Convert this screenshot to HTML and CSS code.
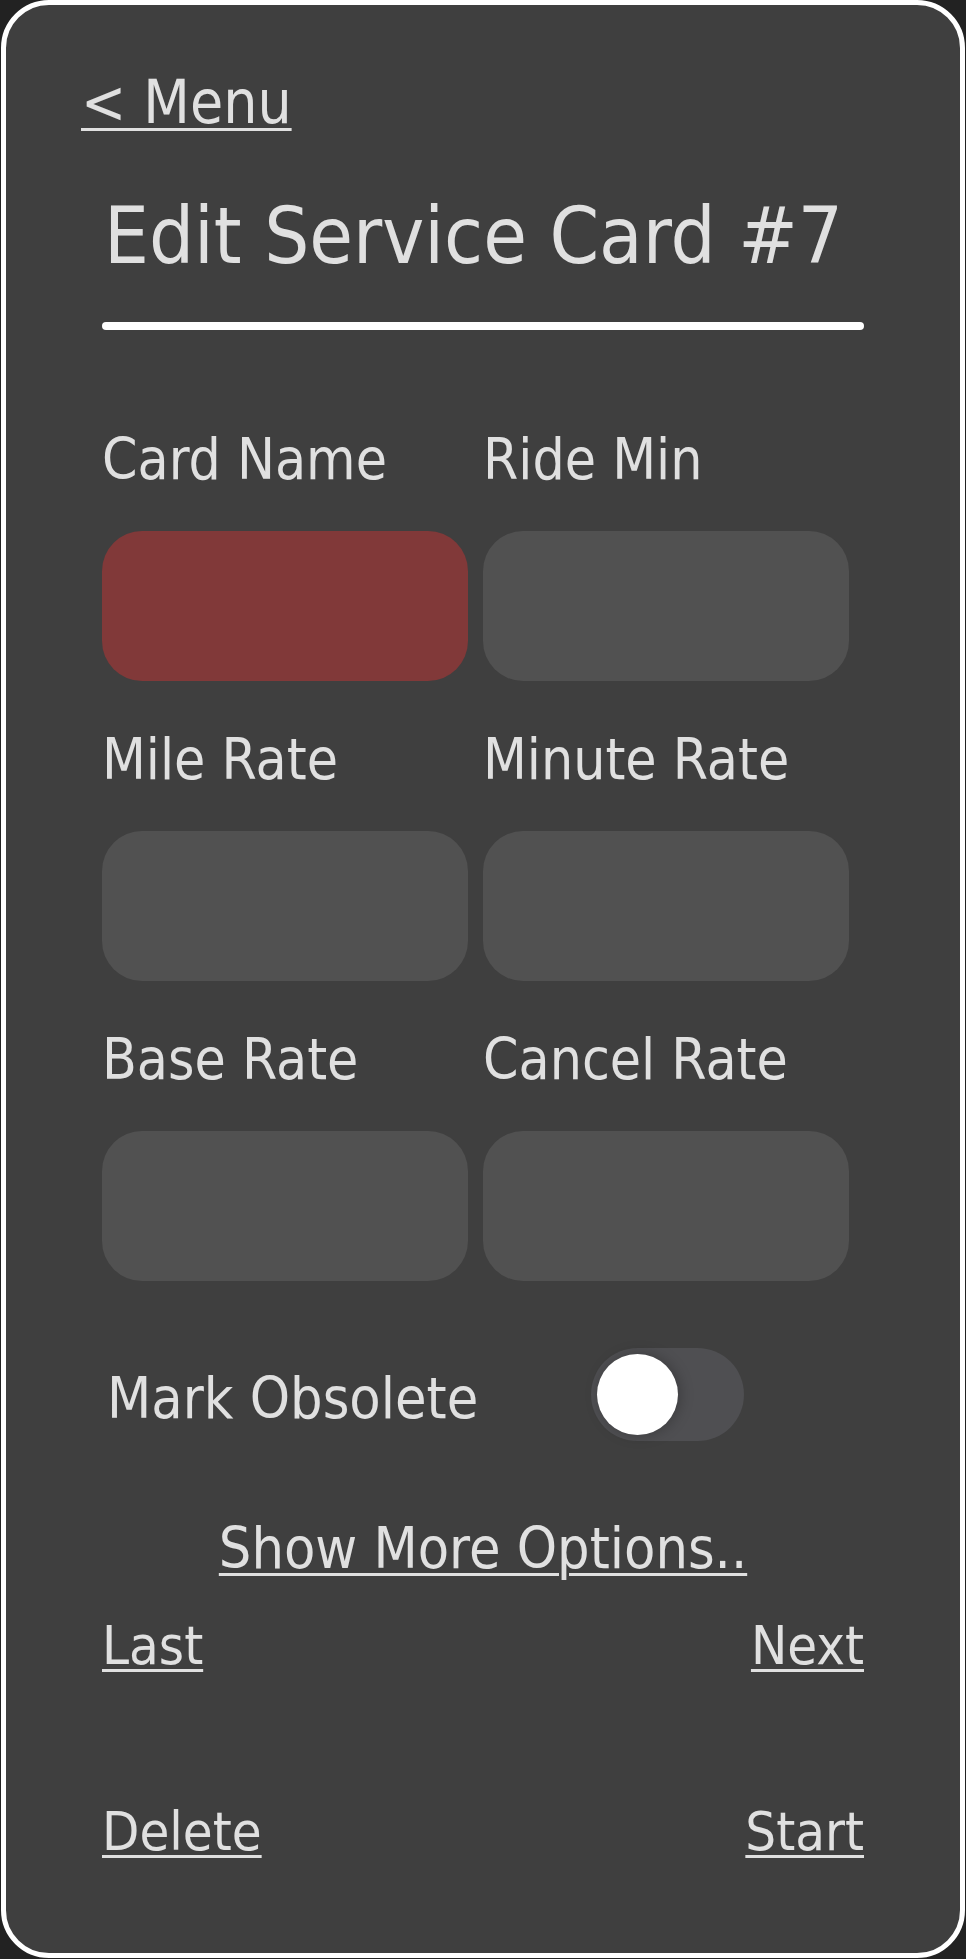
FILE: index.html
```html
<!DOCTYPE html>
<html lang="en">
<head>
<meta charset="utf-8">
<title>Edit Service Card #7</title>
<link rel="stylesheet" href="styles.css">
</head>
<body>
<main class="card">
  <a class="back link" href="#">&lt; Menu</a>
  <h1 class="title">Edit Service Card #7</h1>
  <hr class="rule">
  <form class="fields">
    <label class="field">
      <span class="field-label">Card Name</span>
      <input class="field-input invalid" type="text">
    </label>
    <label class="field">
      <span class="field-label">Ride Min</span>
      <input class="field-input" type="text">
    </label>
    <label class="field">
      <span class="field-label">Mile Rate</span>
      <input class="field-input" type="text">
    </label>
    <label class="field">
      <span class="field-label">Minute Rate</span>
      <input class="field-input" type="text">
    </label>
    <label class="field">
      <span class="field-label">Base Rate</span>
      <input class="field-input" type="text">
    </label>
    <label class="field">
      <span class="field-label">Cancel Rate</span>
      <input class="field-input" type="text">
    </label>
  </form>
  <div class="switch-row">
    <span class="switch-label">Mark Obsolete</span>
    <span class="toggle"><span class="knob"></span></span>
  </div>
  <a class="more link" href="#">Show More Options..</a>
  <nav class="nav nav-top">
    <a class="link nav-link" href="#">Last</a>
    <a class="link nav-link" href="#">Next</a>
  </nav>
  <nav class="nav nav-bottom">
    <a class="link nav-link" href="#">Delete</a>
    <a class="link nav-link" href="#">Start</a>
  </nav>
</main>
</body>
</html>
```
FILE: styles.css
```css
html, body {
  margin: 0;
  background: #222222;
}

body {
  font-family: "DejaVu Sans Condensed", "DejaVu Sans", sans-serif;
  color: #e0e0e0;
}

.card {
  box-sizing: border-box;
  width: 964px;
  height: 1958px;
  margin-left: 1px;
  border: 5px solid #ffffff;
  border-radius: 48px;
  background: #3f3f3f;
  padding: 62px 96px 0;
  display: flex;
  flex-direction: column;
}

.link {
  color: #e0e0e0;
  text-decoration: underline;
  text-decoration-thickness: 3px;
  text-underline-offset: 5px;
  font-size: 57px;
  line-height: 66px;
}

.back {
  align-self: flex-start;
  font-size: 60px;
  line-height: 70px;
  margin-left: -21px;
}

.title {
  margin: 54px 0 0 2px;
  font-size: 79px;
  line-height: 90px;
  font-weight: normal;
}

.rule {
  height: 8px;
  margin: 41px 0 0;
  border: 0;
  border-radius: 4px;
  background: #ffffff;
}

.fields {
  display: grid;
  grid-template-columns: 366px 366px;
  column-gap: 15px;
  row-gap: 46px;
  margin: 97px 0 0;
}

.field {
  display: flex;
  flex-direction: column;
  gap: 38px;
}

.field-label {
  font-size: 56.5px;
  line-height: 66px;
}

.field-input {
  box-sizing: border-box;
  width: 100%;
  height: 150px;
  border: 0;
  border-radius: 40px;
  background: #515151;
  padding: 0 30px;
  font: inherit;
  font-size: 48px;
  color: inherit;
  outline: none;
}

.field-input.invalid {
  background: #813939;
}

.switch-row {
  display: flex;
  align-items: center;
  margin-top: 67px;
}

.switch-label {
  flex: 0 0 484px;
  margin-left: 5px;
  font-size: 57px;
  line-height: 66px;
  padding-top: 6px;
}

.toggle {
  box-sizing: border-box;
  width: 153px;
  height: 93px;
  padding: 6px;
  border-radius: 47px;
  background: #4f4f52;
}

.knob {
  display: block;
  width: 81px;
  height: 81px;
  border-radius: 50%;
  background: #ffffff;
  box-shadow: 2px 0 14px rgba(0, 0, 0, 0.25);
}

.more {
  align-self: center;
  margin-top: 74px;
}

.nav {
  display: flex;
  justify-content: space-between;
}

.nav-link {
  font-size: 54px;
}

.nav-top {
  margin-top: 32px;
}

.nav-bottom {
  margin-top: 120px;
}
```
